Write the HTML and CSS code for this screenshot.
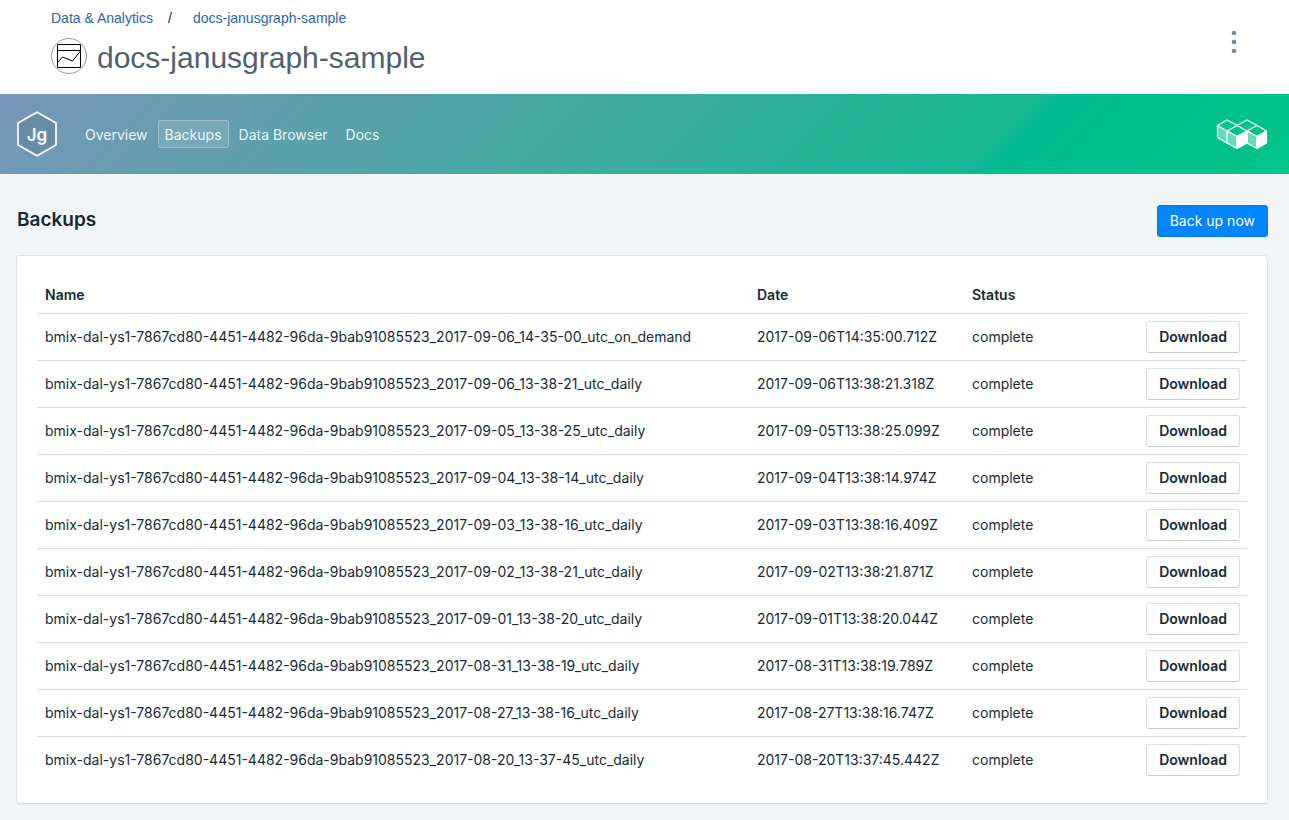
FILE: index.html
```
<!DOCTYPE html>
<html lang="en">
<head>
<meta charset="utf-8">
<title>docs-janusgraph-sample</title>
<link rel="stylesheet" href="styles.css">
</head>
<body>
<header class="page-header">
  <div class="page-heading">
    <nav class="breadcrumb" aria-label="Breadcrumb">
      <a href="#">Data &amp; Analytics</a><span class="separator">/</span><a href="#">docs-janusgraph-sample</a>
    </nav>
    <div class="service">
      <svg class="service-icon" viewBox="0 0 36 36" aria-hidden="true">
        <circle cx="18" cy="18" r="17.5" fill="none" stroke="#8798a5"/>
        <path d="M6.500 6.500h23v23h-23zM6.500 12.500h23" fill="none" stroke="#000"/>
        <path d="M6.500 24.500l5-5.500 10 4 8-10" fill="none" stroke="#000"/>
      </svg>
      <h1>docs-janusgraph-sample</h1>
    </div>
  </div>
  <button class="menu-button" type="button" aria-label="More actions">
    <svg viewBox="0 0 6 24" fill="#73899a" aria-hidden="true"><circle cx="3" cy="3" r="2.300"/><circle cx="3" cy="12" r="2.300"/><circle cx="3" cy="21" r="2.300"/></svg>
  </button>
</header>
<div class="banner">
  <svg class="logo" viewBox="0 0 40 46" role="img" aria-label="JanusGraph">
    <path d="M20 1.200L39 12v22L20 44.800 1 34V12z" fill="#678da6" stroke="#fff" stroke-width="1.700"/>
    <text x="20" y="30" text-anchor="middle" class="logo-text">Jg</text>
  </svg>
  <nav class="tabs" aria-label="Service">
    <a href="#">Overview</a>
    <a href="#" class="active" aria-current="page">Backups</a>
    <a href="#">Data Browser</a>
    <a href="#">Docs</a>
  </nav>
  <svg class="brand" viewBox="0 0 52 30" role="img" aria-label="Compose">
    <g stroke="#fff" stroke-width="1.300" stroke-linejoin="round">
      <path d="M1.500 6.500L11 1l10 5.500L11 12zM21 6.500L31 1l10 5.500L31 12zM11 12l10-5.500L31 12l-10 5.500zM31 12l10-5.500L50.500 12l-9.500 5.500z" fill="#00c389"/>
      <path d="M1.500 6.500L11 12v12l-9.500-5.500zM11 12l10 5.500v12L11 24zM31 12l10 5.500v12L31 24z" fill="#66dbb8"/>
      <path d="M21 17.500L31 12v12l-10 5.500zM41 17.500L50.500 12v12L41 29.500z" fill="#fff"/>
    </g>
  </svg>
</div>
<main>
  <div class="section-header">
    <h2>Backups</h2>
    <button class="primary" type="button">Back up now</button>
  </div>
  <section class="card">
    <table>
      <thead><tr><th scope="col">Name</th><th class="col-date" scope="col">Date</th><th class="col-status" scope="col">Status</th><td class="col-action"></td></tr></thead>
      <tbody>
        <tr><td>bmix-dal-ys1-7867cd80-4451-4482-96da-9bab91085523_2017-09-06_14-35-00_utc_on_demand</td><td>2017-09-06T14:35:00.712Z</td><td>complete</td><td class="action"><button type="button">Download</button></td></tr>
        <tr><td>bmix-dal-ys1-7867cd80-4451-4482-96da-9bab91085523_2017-09-06_13-38-21_utc_daily</td><td>2017-09-06T13:38:21.318Z</td><td>complete</td><td class="action"><button type="button">Download</button></td></tr>
        <tr><td>bmix-dal-ys1-7867cd80-4451-4482-96da-9bab91085523_2017-09-05_13-38-25_utc_daily</td><td>2017-09-05T13:38:25.099Z</td><td>complete</td><td class="action"><button type="button">Download</button></td></tr>
        <tr><td>bmix-dal-ys1-7867cd80-4451-4482-96da-9bab91085523_2017-09-04_13-38-14_utc_daily</td><td>2017-09-04T13:38:14.974Z</td><td>complete</td><td class="action"><button type="button">Download</button></td></tr>
        <tr><td>bmix-dal-ys1-7867cd80-4451-4482-96da-9bab91085523_2017-09-03_13-38-16_utc_daily</td><td>2017-09-03T13:38:16.409Z</td><td>complete</td><td class="action"><button type="button">Download</button></td></tr>
        <tr><td>bmix-dal-ys1-7867cd80-4451-4482-96da-9bab91085523_2017-09-02_13-38-21_utc_daily</td><td>2017-09-02T13:38:21.871Z</td><td>complete</td><td class="action"><button type="button">Download</button></td></tr>
        <tr><td>bmix-dal-ys1-7867cd80-4451-4482-96da-9bab91085523_2017-09-01_13-38-20_utc_daily</td><td>2017-09-01T13:38:20.044Z</td><td>complete</td><td class="action"><button type="button">Download</button></td></tr>
        <tr><td>bmix-dal-ys1-7867cd80-4451-4482-96da-9bab91085523_2017-08-31_13-38-19_utc_daily</td><td>2017-08-31T13:38:19.789Z</td><td>complete</td><td class="action"><button type="button">Download</button></td></tr>
        <tr><td>bmix-dal-ys1-7867cd80-4451-4482-96da-9bab91085523_2017-08-27_13-38-16_utc_daily</td><td>2017-08-27T13:38:16.747Z</td><td>complete</td><td class="action"><button type="button">Download</button></td></tr>
        <tr><td>bmix-dal-ys1-7867cd80-4451-4482-96da-9bab91085523_2017-08-20_13-37-45_utc_daily</td><td>2017-08-20T13:37:45.442Z</td><td>complete</td><td class="action"><button type="button">Download</button></td></tr>
      </tbody>
    </table>
  </section>
</main>
</body>
</html>
```
FILE: styles.css
```
* { box-sizing: border-box; }
body {
  margin: 0;
  background: #f1f5f8;
  color: #152935;
  font: 14px/20px Inter, "Liberation Sans", sans-serif;
}
h1, h2 { margin: 0; }
a { text-decoration: none; }
svg { display: block; }
button { font: inherit; cursor: pointer; }

.page-header {
  display: flex;
  justify-content: space-between;
  align-items: flex-start;
  padding: 8px 52px 16px 51px;
  background: #fff;
  font-family: "Liberation Sans", sans-serif;
}
.breadcrumb { display: flex; color: #152935; }
.breadcrumb a { color: #2d62ad; }
.separator { width: 40px; padding-left: 15px; }
.service {
  display: flex;
  align-items: center;
  gap: 10px;
  margin-top: 10px;
}
.service-icon { width: 36px; height: 36px; margin-bottom: 4px; }
h1 {
  font-size: 30px;
  line-height: 40px;
  font-weight: 400;
  color: #50606c;
}
.menu-button {
  margin-top: 22px;
  padding: 0;
  border: 0;
  background: none;
}
.menu-button svg { width: 6px; height: 24px; }

.banner {
  display: flex;
  align-items: center;
  height: 80px;
  padding: 0 21px 0 17px;
  background: linear-gradient(135deg, #7896b8 0%, #53a3a7 32%, #3bac9d 50%, #16b894 76%, #00bb93 78%, #00c587 100%);
}
.logo { width: 40px; height: 46px; }
.logo-text { font-size: 17px; font-weight: 600; fill: #fff; }
.tabs {
  display: flex;
  gap: 2px;
  margin: 0 auto 0 20px;
}
.tabs a {
  padding: 4px 7px 2px;
  border: 1px solid transparent;
  border-radius: 3px;
  color: rgba(255, 255, 255, .9);
}
.tabs .active {
  padding: 4px 6px 2px;
  border-color: rgba(255, 255, 255, .3);
  background: rgba(255, 255, 255, .12);
}
.brand { width: 52px; height: 30px; }

main { padding: 31px 21px 16px 16px; }
.section-header {
  display: flex;
  justify-content: space-between;
  margin-bottom: 18px;
}
h2 {
  padding-left: 1px;
  font-size: 19px;
  line-height: 30px;
  font-weight: 600;
}
.primary {
  height: 32px;
  padding: 0 12px;
  border: 1px solid #007bec;
  border-radius: 3px;
  background: #0085ff;
  color: #fff;
}
.card {
  padding: 20px;
  border: 1px solid #dde2e6;
  border-bottom-color: #ccd2d7;
  border-radius: 4px;
  background: #fff;
  box-shadow: 0 1px 2px rgba(21, 41, 53, .06);
}
table { width: 100%; table-layout: fixed; border-collapse: collapse; }
th, td { padding: 7px 8px; text-align: left; }
th { padding: 9px 8px 8px; font-weight: 600; }
tbody td { border-top: 1px solid #d8dbde; }
.col-date { width: 215px; }
.col-status { width: 141px; }
.col-action { width: 142px; }
td.action { padding-right: 7px; text-align: right; }
td button {
  display: inline-block;
  height: 32px;
  padding: 0 12px;
  border: 1px solid #d9dde0;
  border-bottom-color: #c6ccd2;
  border-radius: 3px;
  background: #fff;
  color: #152935;
  font-weight: 600;
  vertical-align: top;
}
```
